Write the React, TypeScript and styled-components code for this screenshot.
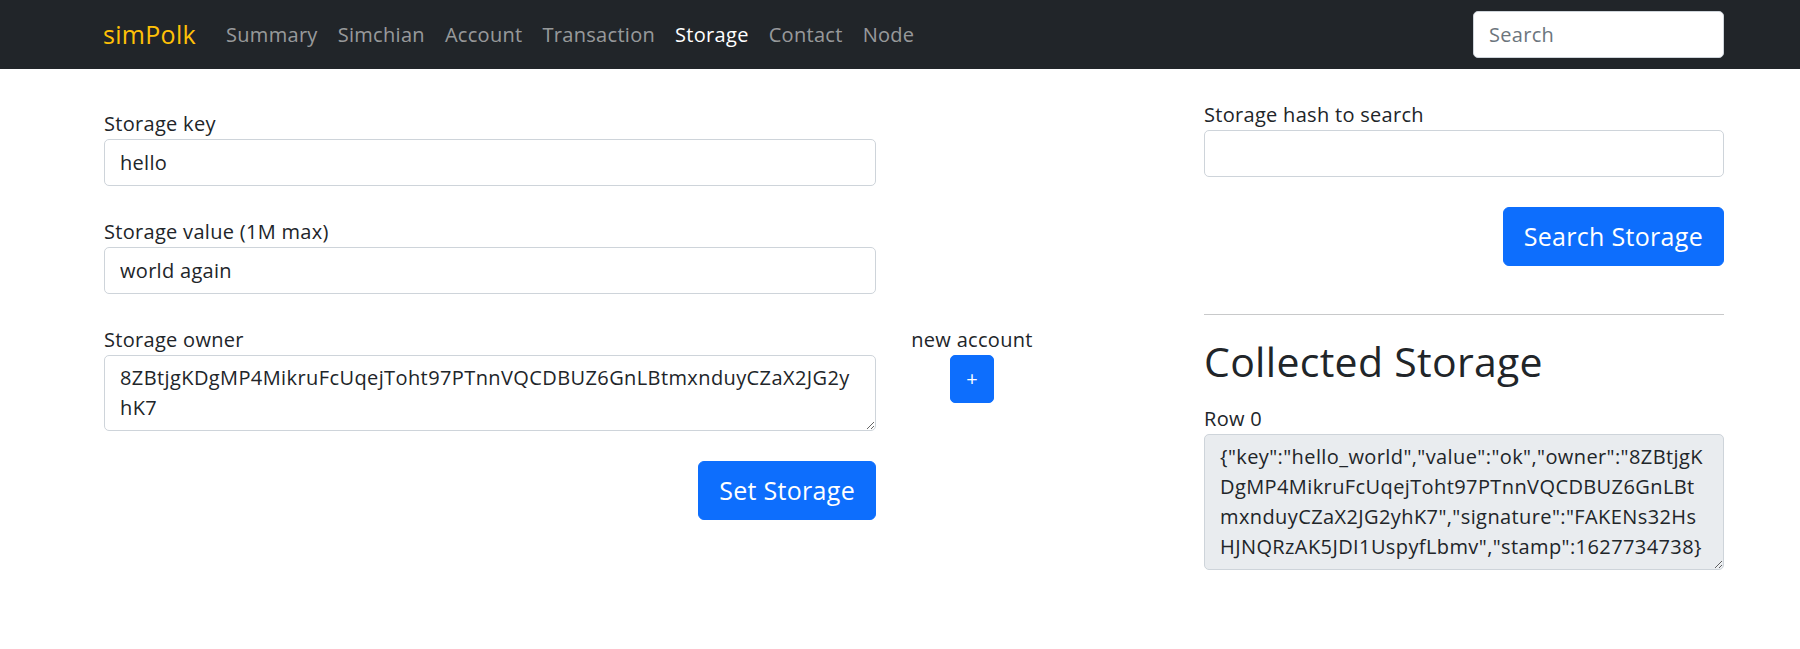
import React from 'react';
import styled, { createGlobalStyle } from 'styled-components';

const GlobalStyle = createGlobalStyle`
  html, body {
    margin: 0;
    padding: 0;
    background: #fff;
  }
  body {
    font-family: "Open Sans", "Noto Sans", sans-serif;
    font-size: 20px;
    line-height: 1.5;
    letter-spacing: 0.015em;
    color: #212529;
  }
  *, *::before, *::after {
    box-sizing: border-box;
  }
`;

const Navbar = styled.nav`
  background: #212529;
  height: 69px;
  display: flex;
  align-items: center;
`;

const NavInner = styled.div`
  width: 1724px;
  padding-left: 103px;
  display: flex;
  align-items: center;
`;

const Brand = styled.a`
  color: #ffc107;
  font-size: 25px;
  line-height: 37px;
  margin-right: 20px;
  text-decoration: none;
`;

const NavList = styled.ul`
  display: flex;
  list-style: none;
  margin: 0;
  padding: 0;
  flex: 1 0;
`;

const NavLink = styled.a<{ $active?: boolean }>`
  display: block;
  padding: 10px;
  color: ${(p) => (p.$active ? '#fff' : 'rgba(255, 255, 255, 0.55)')};
  text-decoration: none;
`;

const SearchInput = styled.input`
  width: 251px;
  height: 47px;
  padding: 7px 15px;
  font: inherit;
  letter-spacing: inherit;
  color: #212529;
  background: #fff;
  border: 1px solid #ced4da;
  border-radius: 5px;
  outline: none;

  &::placeholder {
    color: #6c757d;
  }
`;

const Main = styled.main`
  display: flex;
  flex-direction: row;
  gap: 30px;
  padding-left: 104px;
  width: 1724px;
`;

const LeftColumn = styled.div`
  width: 1070px;
  padding-top: 40px;
`;

const RightColumn = styled.div`
  width: 520px;
  padding-top: 31px;
  display: flex;
  flex-direction: column;
`;

const Form = styled.div`
  width: 772px;
  display: flex;
  flex-direction: column;
`;

const Field = styled.div<{ $gap?: number }>`
  display: flex;
  flex-direction: column;
  margin-bottom: ${(p) => p.$gap ?? 0}px;
`;

const Label = styled.label`
  display: block;
  line-height: 30px;
  height: 30px;
`;

const TextInput = styled.input`
  display: block;
  width: 100%;
  height: 47px;
  padding: 7px 15px;
  font: inherit;
  letter-spacing: inherit;
  line-height: 30px;
  color: #212529;
  background: #fff;
  border: 1px solid #ced4da;
  border-radius: 5px;
  outline: none;
`;

const TextArea = styled.textarea<{ $disabled?: boolean }>`
  display: block;
  width: 100%;
  padding: 7px 15px;
  font: inherit;
  letter-spacing: 0.02em;
  line-height: 30px;
  color: #212529;
  background: ${(p) => (p.$disabled ? '#e9ecef' : '#fff')};
  border: 1px solid #ced4da;
  border-radius: 5px;
  outline: none;
  resize: vertical;
  overflow: hidden;
`;

const OwnerRow = styled.div`
  display: flex;
  flex-direction: row;
  width: 1070px;
`;

const OwnerField = styled.div`
  width: 772px;
  display: flex;
  flex-direction: column;
`;

const NewAccount = styled.div`
  margin-left: 30px;
  width: 132px;
  display: flex;
  flex-direction: column;
  align-items: center;
  line-height: 30px;
`;

const Button = styled.button<{ $large?: boolean }>`
  font-family: inherit;
  letter-spacing: inherit;
  font-size: ${(p) => (p.$large ? 25 : 20)}px;
  line-height: ${(p) => (p.$large ? 37 : 30)}px;
  padding: ${(p) => (p.$large ? '10px 20px' : '8px 15px')};
  color: #fff;
  background: #0d6efd;
  border: 1px solid #0d6efd;
  border-radius: ${(p) => (p.$large ? 6 : 5)}px;
  cursor: pointer;
`;

const Actions = styled.div<{ $top: number }>`
  display: flex;
  justify-content: flex-end;
  margin-top: ${(p) => p.$top}px;
`;

const Rule = styled.hr`
  margin: 48px 0 0;
  border: 0;
  border-top: 1px solid #c8c9ca;
`;

const Heading = styled.h2`
  margin: 22px 0 0;
  font-size: 41px;
  font-weight: 400;
  line-height: 48px;
`;

const RowBlock = styled.div`
  margin-top: 19px;
  display: flex;
  flex-direction: column;
`;

const links = ['Summary', 'Simchian', 'Account', 'Transaction', 'Storage', 'Contact', 'Node'];

const owner = '8ZBtjgKDgMP4MikruFcUqejToht97PTnnVQCDBUZ6GnLBtmxnduyCZaX2JG2yhK7';

const row0 =
  '{"key":"hello_world","value":"ok","owner":"' +
  owner +
  '","signature":"FAKENs32HsHJNQRzAK5JDI1UspyfLbmv","stamp":1627734738}';

function Header() {
  return (
    <Navbar>
      <NavInner>
        <Brand href="#">simPolk</Brand>
        <NavList>
          {links.map((l) => (
            <li key={l}>
              <NavLink href="#" $active={l === 'Storage'}>
                {l}
              </NavLink>
            </li>
          ))}
        </NavList>
        <SearchInput placeholder="Search" />
      </NavInner>
    </Navbar>
  );
}

function App() {
  return (
    <>
      <GlobalStyle />
      <Header />
      <Main>
        <LeftColumn>
          <Form>
            <Field $gap={31}>
              <Label>Storage key</Label>
              <TextInput defaultValue="hello" />
            </Field>
            <Field $gap={31}>
              <Label>Storage value (1M max)</Label>
              <TextInput defaultValue="world again" />
            </Field>
          </Form>
          <OwnerRow>
            <OwnerField>
              <Label>Storage owner</Label>
              <TextArea rows={2} defaultValue={owner} />
            </OwnerField>
            <NewAccount>
              <span>new account</span>
              <Button>+</Button>
            </NewAccount>
          </OwnerRow>
          <Form>
            <Actions $top={30}>
              <Button $large>Set Storage</Button>
            </Actions>
          </Form>
        </LeftColumn>
        <RightColumn>
          <Field>
            <Label>Storage hash to search</Label>
            <TextInput />
          </Field>
          <Actions $top={30}>
            <Button $large>Search Storage</Button>
          </Actions>
          <Rule />
          <Heading>Collected Storage</Heading>
          <RowBlock>
            <Label>Row 0</Label>
            <TextArea rows={4} $disabled readOnly value={row0} />
          </RowBlock>
        </RightColumn>
      </Main>
    </>
  );
}

export default App;
